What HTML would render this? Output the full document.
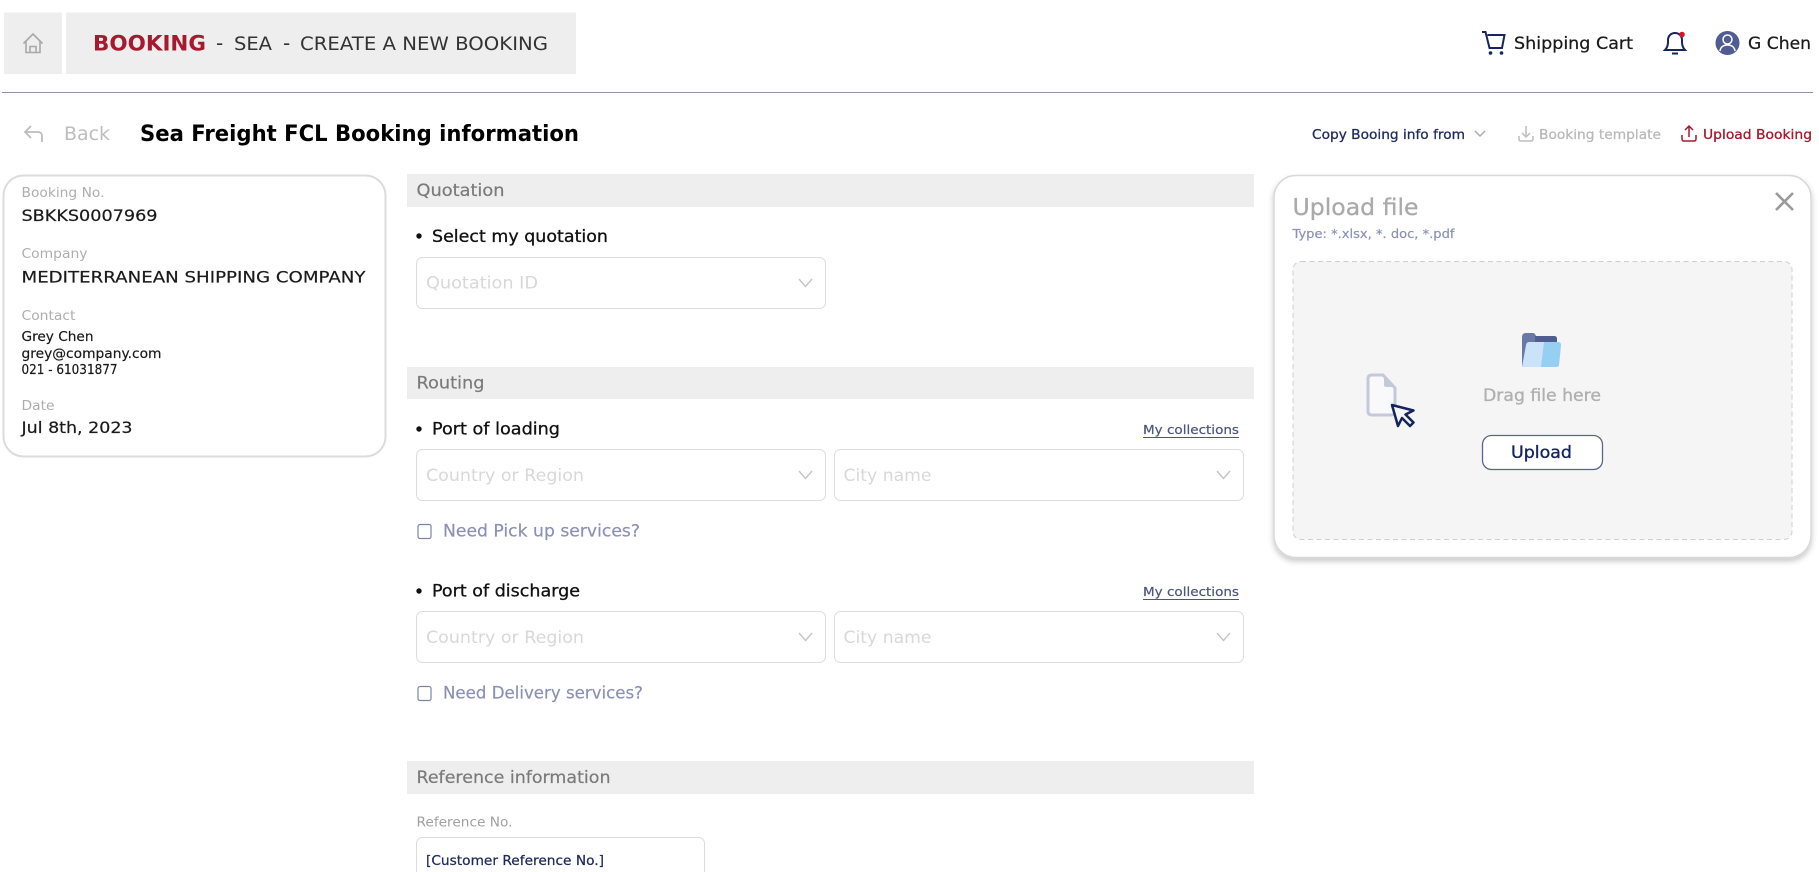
<!DOCTYPE html>
<html lang="en"><head><meta charset="utf-8"><title>Sea Freight FCL Booking</title>
<style>
html,body{margin:0;padding:0;background:#fff;width:1819px;height:872px;overflow:hidden}
svg{display:block}
text{font-family:"DejaVu Sans","Liberation Sans",sans-serif}
.lbl{font-size:13px;fill:#aeaeae}
.val{font-size:16px;fill:#1a1a1a;stroke:#1a1a1a;stroke-width:.2px}
.sm{font-size:13px;fill:#1a1a1a;stroke:#1a1a1a;stroke-width:.2px}
.sec{font-size:16.5px;fill:#7a7a7a;stroke:#7a7a7a;stroke-width:.2px}
.q{font-size:16.5px;fill:#111;stroke:#111;stroke-width:.3px}
.ph{font-size:16.5px;fill:#d8d8d8}
.cb{font-size:16.5px;fill:#8b91b5;stroke:#8b91b5;stroke-width:.2px}
.mc{font-size:12.5px;fill:#4a5580;stroke:#4a5580;stroke-width:.2px}
</style></head><body>
<svg width="1819" height="872" viewBox="0 0 1819 872" xmlns="http://www.w3.org/2000/svg">
<defs>
<filter id="sh" x="-5%" y="-5%" width="110%" height="115%"><feDropShadow dx="0" dy="3" stdDeviation="3" flood-color="#000" flood-opacity=".22"/></filter>
<g id="chev"><path d="M0 0l6.500 7.500L13 0" fill="none" stroke="#c4c4c4" stroke-width="1.400"/></g>
</defs>
<!-- header -->
<rect x="4" y="12.500" width="58" height="61.500" fill="#eee"/>
<rect x="66" y="12.500" width="510" height="61.500" fill="#eee"/>
<path d="M23.500 43.500l9.500-9.500 9.500 9.500M26 41v11.500h14V41M30 52.500v-6h6v6" fill="none" stroke="#a8a8a8" stroke-width="1.600"/>
<text x="93" y="50.500" font-size="21" font-weight="700" fill="#a6192e" textLength="113" lengthAdjust="spacingAndGlyphs">BOOKING</text>
<text x="216" y="50" font-size="20" fill="#333">-</text>
<text x="234" y="50" font-size="19" fill="#333" textLength="38" lengthAdjust="spacingAndGlyphs">SEA</text>
<text x="283" y="50" font-size="20" fill="#333">-</text>
<text x="300" y="50" font-size="19" fill="#333" textLength="248" lengthAdjust="spacingAndGlyphs">CREATE A NEW BOOKING</text>
<path d="M1482 32h3.500l4 16h12.500l2.500-13h-17" fill="none" stroke="#16255f" stroke-width="2"/>
<circle cx="1490.500" cy="53" r="1.800" fill="#16255f"/><circle cx="1501.500" cy="53" r="1.800" fill="#16255f"/>
<text x="1514" y="49" font-size="17" fill="#1a1a1a" stroke="#1a1a1a" stroke-width=".25" textLength="119" lengthAdjust="spacingAndGlyphs">Shipping Cart</text>
<path d="M1665 50h20c-2-2-3-4-3-8v-2c0-4-3-7-7-7s-7 3-7 7v2c0 4-1 6-3 8zM1672 53.500h6" fill="none" stroke="#16255f" stroke-width="2"/>
<circle cx="1682" cy="34.500" r="2.800" fill="#e01020"/>
<circle cx="1727.500" cy="43" r="12" fill="#505d92"/>
<circle cx="1727.500" cy="39.500" r="4.500" fill="none" stroke="#fff" stroke-width="1.500"/>
<path d="M1720 51c.5-4 3.500-6 7.500-6s7 2 7.500 6" fill="none" stroke="#fff" stroke-width="1.500"/>
<text x="1748" y="49" font-size="17" fill="#1a1a1a" stroke="#1a1a1a" stroke-width=".25" textLength="63" lengthAdjust="spacingAndGlyphs">G Chen</text>
<rect x="2" y="92" width="1811" height="1" fill="#8f94ad"/>
<!-- toolbar -->
<path d="M31 126l-6 6 6 6M25 132h13c2.500 0 4 1.500 4 4v6" fill="none" stroke="#bdbdbd" stroke-width="1.800"/>
<text x="64" y="140" font-size="19" fill="#bdbdbd" textLength="46" lengthAdjust="spacingAndGlyphs">Back</text>
<text x="140" y="141" font-size="22" font-weight="700" fill="#000" textLength="439" lengthAdjust="spacingAndGlyphs">Sea Freight FCL Booking information</text>
<text x="1312" y="139" font-size="13" fill="#1e2a5e" stroke="#1e2a5e" stroke-width=".3" textLength="153" lengthAdjust="spacingAndGlyphs">Copy Booing info from</text>
<path d="M1475 131l5 5 5-5" fill="none" stroke="#aaa" stroke-width="1.400"/>
<path d="M1526 126v11M1522 133l4 4 4-4M1519 136v3q0 2 2 2h10q2 0 2-2v-3" fill="none" stroke="#bdbdbd" stroke-width="1.500"/>
<text x="1539" y="139" font-size="13" fill="#b8b8b8" stroke="#b8b8b8" stroke-width=".25" textLength="122" lengthAdjust="spacingAndGlyphs">Booking template</text>
<path d="M1689 137v-11M1685 130l4-4 4 4M1682 135v4q0 2 2 2h10q2 0 2-2v-4" fill="none" stroke="#a6192e" stroke-width="1.500"/>
<text x="1703" y="139" font-size="13" fill="#a6192e" stroke="#a6192e" stroke-width=".3" textLength="109" lengthAdjust="spacingAndGlyphs">Upload Booking</text>
<!-- left card -->
<rect x="3.500" y="175.500" width="382" height="281" rx="20" fill="#fff" stroke="#dcdcdc" stroke-width="2"/>
<text class="lbl" x="21.500" y="197" textLength="83" lengthAdjust="spacingAndGlyphs">Booking No.</text>
<text class="val" x="21.500" y="221" textLength="136" lengthAdjust="spacingAndGlyphs">SBKKS0007969</text>
<text class="lbl" x="21.500" y="258" textLength="66" lengthAdjust="spacingAndGlyphs">Company</text>
<text class="val" x="21.500" y="282.500" textLength="344" lengthAdjust="spacingAndGlyphs">MEDITERRANEAN SHIPPING COMPANY</text>
<text class="lbl" x="21.500" y="320" textLength="54" lengthAdjust="spacingAndGlyphs">Contact</text>
<text class="sm" x="21.500" y="341" textLength="72" lengthAdjust="spacingAndGlyphs">Grey Chen</text>
<text class="sm" x="21.500" y="358" textLength="140" lengthAdjust="spacingAndGlyphs">grey@company.com</text>
<text class="sm" x="21.500" y="374" textLength="96" lengthAdjust="spacingAndGlyphs">021 - 61031877</text>
<text class="lbl" x="21.500" y="410" textLength="33" lengthAdjust="spacingAndGlyphs">Date</text>
<text class="val" x="21.500" y="433" textLength="111" lengthAdjust="spacingAndGlyphs">Jul 8th, 2023</text>
<!-- form -->
<rect x="407" y="174" width="847" height="33" fill="#eee"/>
<text class="sec" x="416.500" y="196" textLength="88" lengthAdjust="spacingAndGlyphs">Quotation</text>
<circle cx="419" cy="236" r="2.700" fill="#111"/>
<text class="q" x="432" y="242" textLength="176" lengthAdjust="spacingAndGlyphs">Select my quotation</text>
<rect x="416.500" y="257.500" width="409" height="51" rx="6" fill="#fff" stroke="#ddd"/>
<text class="ph" x="426" y="288.500" textLength="112" lengthAdjust="spacingAndGlyphs">Quotation ID</text>
<use href="#chev" x="799" y="279"/>

<rect x="407" y="367" width="847" height="32" fill="#eee"/>
<text class="sec" x="416.500" y="388.500" textLength="68" lengthAdjust="spacingAndGlyphs">Routing</text>
<circle cx="419" cy="429" r="2.700" fill="#111"/>
<text class="q" x="432" y="434.500" textLength="128" lengthAdjust="spacingAndGlyphs">Port of loading</text>
<text class="mc" x="1143" y="434" textLength="96" lengthAdjust="spacingAndGlyphs">My collections</text>
<rect x="1143" y="437" width="96" height="1" fill="#4a5580"/>
<rect x="416.500" y="449.500" width="409" height="51" rx="6" fill="#fff" stroke="#ddd"/>
<text class="ph" x="426" y="481" textLength="158" lengthAdjust="spacingAndGlyphs">Country or Region</text>
<use href="#chev" x="799" y="471"/>
<rect x="834.500" y="449.500" width="409" height="51" rx="6" fill="#fff" stroke="#ddd"/>
<text class="ph" x="843.500" y="481" textLength="88" lengthAdjust="spacingAndGlyphs">City name</text>
<use href="#chev" x="1217" y="471"/>
<rect x="418" y="524.500" width="13" height="14" rx="2" fill="#fff" stroke="#7c82a4" stroke-width="1.200"/>
<text class="cb" x="443" y="536.500" textLength="197" lengthAdjust="spacingAndGlyphs">Need Pick up services?</text>

<circle cx="419" cy="591" r="2.700" fill="#111"/>
<text class="q" x="432" y="596.500" textLength="148" lengthAdjust="spacingAndGlyphs">Port of discharge</text>
<text class="mc" x="1143" y="596" textLength="96" lengthAdjust="spacingAndGlyphs">My collections</text>
<rect x="1143" y="599" width="96" height="1" fill="#4a5580"/>
<rect x="416.500" y="611.500" width="409" height="51" rx="6" fill="#fff" stroke="#ddd"/>
<text class="ph" x="426" y="643" textLength="158" lengthAdjust="spacingAndGlyphs">Country or Region</text>
<use href="#chev" x="799" y="633"/>
<rect x="834.500" y="611.500" width="409" height="51" rx="6" fill="#fff" stroke="#ddd"/>
<text class="ph" x="843.500" y="643" textLength="88" lengthAdjust="spacingAndGlyphs">City name</text>
<use href="#chev" x="1217" y="633"/>
<rect x="418" y="686.500" width="13" height="14" rx="2" fill="#fff" stroke="#7c82a4" stroke-width="1.200"/>
<text class="cb" x="443" y="698.500" textLength="200" lengthAdjust="spacingAndGlyphs">Need Delivery services?</text>

<rect x="407" y="761" width="847" height="33" fill="#eee"/>
<text class="sec" x="416.500" y="783" textLength="194" lengthAdjust="spacingAndGlyphs">Reference information</text>
<text class="lbl" x="416.500" y="826.500" textLength="96" lengthAdjust="spacingAndGlyphs" style="fill:#a0a0a0">Reference No.</text>
<rect x="416.500" y="837.500" width="288" height="60" rx="6" fill="#fff" stroke="#ddd"/>
<text x="426" y="865" font-size="13" fill="#1e2a5e" stroke="#1e2a5e" stroke-width=".25" textLength="178" lengthAdjust="spacingAndGlyphs">[Customer Reference No.]</text>
<!-- upload panel -->
<rect x="1274" y="175.500" width="537" height="382" rx="22" fill="#fff" stroke="#d8d8d8" stroke-width="1.500" filter="url(#sh)"/>
<text x="1292.500" y="215" font-size="23" fill="#aaa" stroke="#aaa" stroke-width=".3" textLength="126" lengthAdjust="spacingAndGlyphs">Upload file</text>
<text x="1292.500" y="238" font-size="12.500" fill="#8b91b5" stroke="#8b91b5" stroke-width=".2" textLength="162" lengthAdjust="spacingAndGlyphs">Type: *.xlsx, *. doc, *.pdf</text>
<path d="M1776 193l17 17M1793 193l-17 17" fill="none" stroke="#9a9a9a" stroke-width="2.600"/>
<rect x="1293" y="261.500" width="499" height="278" rx="8" fill="#f5f5f5" stroke="#cfcfcf" stroke-dasharray="5 3.500"/>
<!-- folder -->
<path d="M1522 367v-30q0-4 4-4h7q2 0 3 3h18q3 0 3 3v10h-30v18z" fill="#6a78a6"/>
<path d="M1535 336h19q3 0 3 3v6h-22z" fill="#505d92"/>
<path d="M1526 345q.500-3 3-3h29q3 0 3 3l-2 20q0 2-3 2h-34z" fill="#cbe3f8"/>
<path d="M1544 342h14q3 0 3 3l-2 20q0 2-3 2h-15z" fill="#97cff3"/>
<!-- doc -->
<path d="M1372 375h11l12 13v23q0 4-4 4h-19q-4 0-4-4v-32q0-4 4-4z" fill="#f9f9fb" stroke="#c4c8da" stroke-width="3"/>
<path d="M1384 376v9q0 2 2 2h8z" fill="#c4c8da"/>
<path d="M1392 405l6 21 4-8 8 8 3.500-3.500-8-8 8-4z" fill="#f5f5f5" stroke="#14235e" stroke-width="2.500" stroke-linejoin="round"/>
<text x="1483" y="401" font-size="16.500" fill="#b0b0b0" stroke="#b0b0b0" stroke-width=".35" textLength="118" lengthAdjust="spacingAndGlyphs">Drag file here</text>
<rect x="1482.500" y="435.500" width="120" height="34" rx="9" fill="#fff" stroke="#5a6590" stroke-width="1.300"/>
<text x="1511" y="458" font-size="16.500" fill="#14235e" stroke="#14235e" stroke-width=".35" textLength="61" lengthAdjust="spacingAndGlyphs">Upload</text>
</svg>
</body></html>
